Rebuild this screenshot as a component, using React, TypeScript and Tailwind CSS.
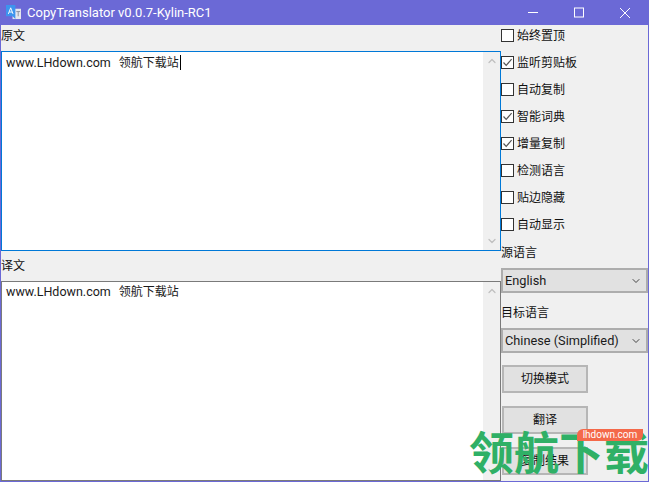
import { ChevronDown, ChevronUp } from "lucide-react";

const font = "font-['Roboto','Noto_Sans_CJK_SC',sans-serif]";

function TextPane({ focused }: { focused?: boolean }) {
  return (
    <div className={`flex h-[200px] border bg-white ${focused ? "border-[#0078d7]" : "border-[#7a7a7a]"}`}>
      <div className="flex-1 pl-[4px] text-[12.5px] leading-[20px] text-[#1a1a1a]">
        <span>www.LHdown.com</span>
        <span className="ml-[8px] text-[12px]">领航下载站</span>
        {focused && <span className="ml-[1px] inline-block h-[15px] w-px translate-y-[3px] bg-black"></span>}
      </div>
      <div className="flex w-[17px] flex-col items-center justify-between bg-[#f0f0f0] py-[3px] text-[#c0c0c0]">
        <ChevronUp size={12} strokeWidth={2.5} />
        <ChevronDown size={12} strokeWidth={2.5} />
      </div>
    </div>
  );
}

function Check({ label, checked }: { label: string; checked?: boolean }) {
  return (
    <div className="flex h-[27px] items-center gap-[3px]">
      <div className="h-[13px] w-[13px] border border-[#333] bg-white">
        {checked && (
          <svg viewBox="0 0 11 11" className="h-[11px] w-[11px]">
            <path d="M1.5 5.5 L4.2 8.4 L9.6 2.2" fill="none" stroke="#555" strokeWidth="1.2" />
          </svg>
        )}
      </div>
      <span className="text-[12px] leading-none text-[#111]">{label}</span>
    </div>
  );
}

function LangSelect({ value }: { value: string }) {
  return (
    <div className="flex h-[25px] w-[147px] items-center justify-between border-2 border-[#adadad] bg-[#e1e1e1] pl-[2px] pr-[4px] text-[12.75px] text-[#1a1a1a]">
      <span>{value}</span>
      <ChevronDown size={12} className="text-[#444]" />
    </div>
  );
}

function Btn({ label }: { label: string }) {
  return (
    <div className="flex h-[28px] w-[86px] items-center justify-center border-2 border-[#b6b6b6] bg-[#e1e1e1] text-[12px] text-[#111]">
      {label}
    </div>
  );
}

export default function App() {
  return (
    <div className={`relative h-[482px] w-[649px] overflow-hidden border-x border-b border-[#6b69d6] bg-[#f0f0f0] ${font}`}>
      <div className="flex h-[25px] items-center bg-[#6b69d6] text-white">
        <svg viewBox="0 0 16 16" className="ml-[5px] h-[15px] w-[15px]">
          <rect x="7" y="4" width="9" height="11" fill="#e4e6ee" />
          <path d="M0 0 H10 V15 L7 12 H0 Z" fill="#3d94ee" />
          <path d="M2.5 9.5 L5 3 L7.5 9.5 M3.5 7.5 H6.5" fill="none" stroke="#fff" strokeWidth="1" />
          <path d="M11 7 H15 M13 7 V12" fill="none" stroke="#8a8f9c" strokeWidth="1" />
        </svg>
        <span className="ml-[6px] text-[13px]">CopyTranslator v0.0.7-Kylin-RC1</span>
        <div className="ml-auto flex items-center">
          <svg viewBox="0 0 46 25" className="h-[25px] w-[46px]">
            <path d="M18 12.5 H28" stroke="#fff" strokeWidth="1" />
          </svg>
          <svg viewBox="0 0 46 25" className="h-[25px] w-[46px]">
            <rect x="18.5" y="8" width="9" height="9" fill="none" stroke="#fff" strokeWidth="1" />
          </svg>
          <svg viewBox="0 0 46 25" className="h-[25px] w-[46px]">
            <path d="M18 8 L28 18 M28 8 L18 18" stroke="#fff" strokeWidth="1" />
          </svg>
        </div>
      </div>
      <div className="flex">
        <div className="w-[500px]">
          <div className="h-[26px] pt-[3px] text-[12px] leading-[16px] text-[#111]">原文</div>
          <TextPane focused />
          <div className="h-[30px] pt-[7px] text-[12px] leading-[16px] text-[#111]">译文</div>
          <TextPane />
        </div>
        <div className="flex-1">
          <div className="mt-[-3px]">
            <Check label="始终置顶" />
            <Check label="监听剪贴板" checked />
            <Check label="自动复制" />
            <Check label="智能词典" checked />
            <Check label="增量复制" checked />
            <Check label="检测语言" />
            <Check label="贴边隐藏" />
            <Check label="自动显示" />
          </div>
          <div className="flex h-[30px] items-center text-[12px] text-[#111]">源语言</div>
          <LangSelect value="English" />
          <div className="flex h-[35px] items-center pt-[4px] text-[12px] text-[#111]">目标语言</div>
          <LangSelect value="Chinese (Simplified)" />
          <div className="ml-px mt-[12px] flex flex-col gap-[13px]">
            <Btn label="切换模式" />
            <Btn label="翻译" />
            <Btn label="复制结果" />
          </div>
        </div>
      </div>
      <div className="absolute left-[468px] top-[428px] whitespace-nowrap text-[45px] font-bold leading-[54px] text-[#2fb066]">
        领航下载
      </div>
      <div className="absolute left-[576px] top-[429px] flex h-[12px] w-[66px] items-center justify-center rounded-tl-[6px] rounded-br-[6px] bg-[#f4694a] text-[10px] leading-none text-white">
        lhdown.com
      </div>
    </div>
  );
}
